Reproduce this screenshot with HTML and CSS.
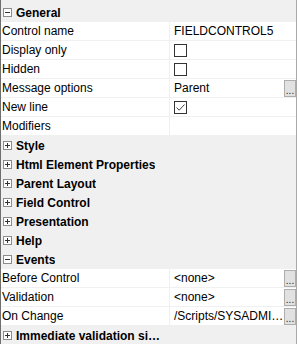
FILE: index.html
```html
<!DOCTYPE html>
<html>
<head>
	<title>Property Grid</title>
	<link rel="stylesheet" href="styles.css">
</head>
<body>
	<div class="grid">
		<div class="cat"><span class="tog"></span><span class="cat-label">General</span></div>
		<div class="prop"><div class="name">Control name</div><div class="val"><span class="txt">FIELDCONTROL5</span></div></div>
		<div class="prop"><div class="name">Display only</div><div class="val"><span class="chk"></span></div></div>
		<div class="prop"><div class="name">Hidden</div><div class="val"><span class="chk"></span></div></div>
		<div class="prop"><div class="name">Message options</div><div class="val"><span class="txt">Parent</span><span class="dots">...</span></div></div>
		<div class="prop"><div class="name">New line</div><div class="val"><span class="chk">
			<svg width="11" height="11" viewBox="0 0 11 11"><path d="M1.5 5.5 L4.2 8.2 L9.5 2.5" fill="none" stroke="#444" stroke-width="1"/></svg>
		</span></div></div>
		<div class="prop"><div class="name">Modifiers</div><div class="val"></div></div>
		<div class="cat"><span class="tog plus"></span><span class="cat-label">Style</span></div>
		<div class="cat"><span class="tog plus"></span><span class="cat-label">Html Element Properties</span></div>
		<div class="cat"><span class="tog plus"></span><span class="cat-label">Parent Layout</span></div>
		<div class="cat"><span class="tog plus"></span><span class="cat-label">Field Control</span></div>
		<div class="cat"><span class="tog plus"></span><span class="cat-label">Presentation</span></div>
		<div class="cat"><span class="tog plus"></span><span class="cat-label">Help</span></div>
		<div class="cat"><span class="tog"></span><span class="cat-label">Events</span></div>
		<div class="prop"><div class="name">Before Control</div><div class="val"><span class="txt">&lt;none&gt;</span><span class="dots">...</span></div></div>
		<div class="prop"><div class="name">Validation</div><div class="val"><span class="txt">&lt;none&gt;</span><span class="dots">...</span></div></div>
		<div class="prop"><div class="name">On Change</div><div class="val"><span class="txt">/Scripts/SYSADMIN/Validate/OnChange</span><span class="dots">...</span></div></div>
		<div class="cat"><span class="tog plus"></span><span class="cat-label">Immediate validation simple rules</span></div>
	</div>
</body>
</html>
```
FILE: styles.css
```css
html, body { margin: 0; padding: 0; background-color: #ffffff; }
body { width: 299px; height: 344px; overflow: hidden; font-family: "Liberation Sans", Arial, sans-serif; font-size: 12px; color: #000000; }

.grid {
	width: 297px;
	height: 344px;
	padding-top: 3px;
	box-sizing: border-box;
	border-left: 1px solid #6f6f6f;
	border-right: 1px solid #a9a9a9;
	background-color: #f0f0f0;
}

/* category rows */
.cat {
	display: flex;
	align-items: center;
	height: 19px;
	padding-left: 2px;
	background-color: #f0f0f0;
	font-weight: bold;
}
.cat-label { max-width: 152px; margin-left: 4px; white-space: nowrap; overflow: hidden; text-overflow: ellipsis; }

.tog {
	position: relative;
	width: 7px;
	height: 7px;
	border: 1px solid #8c8c8c;
	background-color: #ffffff;
	flex: none;
}
.tog:before { content: ""; position: absolute; left: 1px; top: 3px; width: 5px; height: 1px; background-color: #333333; }
.tog.plus:after { content: ""; position: absolute; left: 3px; top: 1px; width: 1px; height: 5px; background-color: #333333; }

/* property rows */
.prop {
	display: grid;
	grid-template-columns: 169px 1fr;
	height: 19px;
	box-sizing: border-box;
	border-bottom: 1px solid #f0f0f0;
	background-color: #ffffff;
}
.name { padding-left: 1px; border-right: 1px solid #f0f0f0; line-height: 18px; white-space: nowrap; overflow: hidden; }
.val { display: flex; align-items: center; padding-left: 4px; min-width: 0; }
.txt { flex: 1; white-space: nowrap; overflow: hidden; text-overflow: ellipsis; line-height: 18px; }

.chk {
	display: flex;
	align-items: center;
	justify-content: center;
	width: 11px;
	height: 11px;
	border: 1px solid #333333;
	background-color: #ffffff;
}

.dots {
	flex: none;
	width: 10px;
	height: 15px;
	border: 1px solid #adadad;
	background-color: #e1e1e1;
	font-size: 10px;
	line-height: 20px;
	text-align: center;
	overflow: hidden;
	color: #222222;
}
```
